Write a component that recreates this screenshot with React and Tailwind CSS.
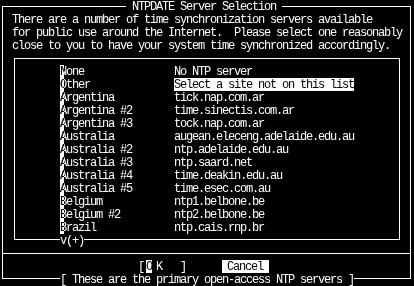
import React from 'react'

const servers = [
  ['None', 'No NTP server'],
  ['Other', 'Select a site not on this list'],
  ['Argentina', 'tick.nap.com.ar'],
  ['Argentina #2', 'time.sinectis.com.ar'],
  ['Argentina #3', 'tock.nap.com.ar'],
  ['Australia', 'augean.eleceng.adelaide.edu.au'],
  ['Australia #2', 'ntp.adelaide.edu.au'],
  ['Australia #3', 'ntp.saard.net'],
  ['Australia #4', 'time.deakin.edu.au'],
  ['Australia #5', 'time.esec.com.au'],
  ['Belgium', 'ntp1.belbone.be'],
  ['Belgium #2', 'ntp2.belbone.be'],
  ['Brazil', 'ntp.cais.rnp.br'],
]

function Hotkey({ ch }) {
  return (
    <span className="relative inline-block w-[6px] h-[13px]">
      {ch}
      <span className="absolute left-0 top-0 h-[13px] w-[4px] bg-white mix-blend-difference"></span>
    </span>
  )
}

function ServerRow({ tag, desc, selected }) {
  return (
    <div className="flex h-[13px] pl-[45px]">
      <div className="w-[114px]">
        <Hotkey ch={tag[0]} />
        <span>{tag.slice(1)}</span>
      </div>
      <div className={selected ? 'bg-white text-black' : ''}>{desc}</div>
    </div>
  )
}

export default function App() {
  return (
    <div className="w-[414px] h-[286px] overflow-hidden bg-black text-white pt-[6px] pl-[2px] font-['Liberation_Mono',monospace] text-[12px] leading-[15px] tracking-[-1.2px] whitespace-pre">
      <div className="w-[409px] border border-white flex flex-col">
        {/* title on the top border */}
        <div className="-mt-[7px] h-[13px] pl-[123px]">
          <span className="bg-black"> NTPDATE Server Selection </span>
        </div>

        {/* prompt */}
        <div className="pl-[9px]">
          <div className="h-[13px]">There are a number of time synchronization servers available</div>
          <div className="h-[13px]">for public use around the Internet.  Please select one reasonably</div>
          <div className="h-[13px]">close to you to have your system time synchronized accordingly.</div>
        </div>

        {/* menu list */}
        <div className="mt-[6px] ml-[11px] w-[386px] border border-white pt-[6px]">
          {servers.map(([tag, desc], i) => (
            <ServerRow key={tag} tag={tag} desc={desc} selected={i === 1} />
          ))}
          <div className="h-[13px] -mb-[8px] pl-[45px]">
            <span className="bg-black">v(+)</span>
          </div>
        </div>

        {/* buttons */}
        <div className="mt-[13px] border-t border-white pt-[6px]">
          <div className="flex h-[13px] pl-[135px]">
            <span>[</span>
            <span className="ml-[2px] w-[6px] bg-white text-black">O</span>
            <span className="ml-[4px]">K</span>
            <span className="ml-[18px]">]</span>
            <span className="ml-[36px] w-[47px] bg-white text-black pl-[5px]">Cancel</span>
          </div>
        </div>

        {/* footer on the bottom border */}
        <div className="h-[13px] -mb-[8px] pl-[57px]">
          <span className="bg-black">[ These are the primary open-access NTP servers ]</span>
        </div>
      </div>
    </div>
  )
}
